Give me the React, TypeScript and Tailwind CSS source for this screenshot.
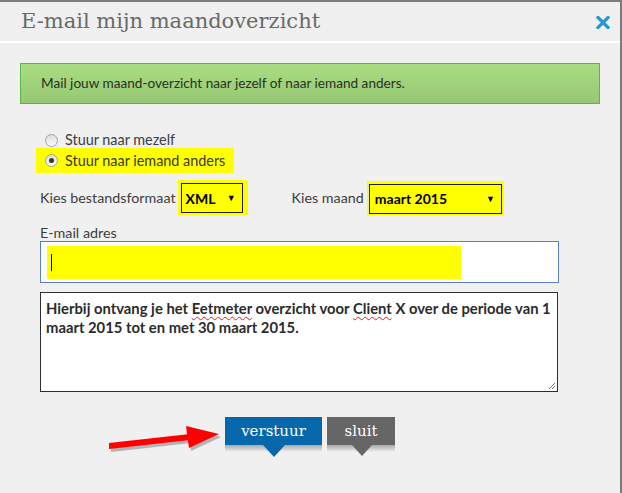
import React from "react";

function Radio({ checked }: { checked?: boolean }) {
  return (
    <span className="relative inline-flex h-[13px] w-[13px] shrink-0 items-center justify-center rounded-full border border-[#a3a3a3] bg-gradient-to-b from-[#dcdcdc] to-[#fbfbfb]">
      {checked && <span className="h-[5px] w-[5px] rounded-full bg-[#3a3a1a]" />}
    </span>
  );
}

export default function App() {
  const body = { fontFamily: "Lato, 'Open Sans', sans-serif" };
  const serif = { fontFamily: "'DejaVu Serif', 'Liberation Serif', serif" };
  return (
    <div className="relative h-[493px] w-[622px] overflow-hidden bg-[#7c7c7c] pt-[2px] pr-[2px]">
      <div className="h-[491px] w-[620px] bg-[#f0f0f0]" style={body}>
        {/* header */}
        <div className="flex h-[41px] items-center justify-between border-b-[2px] border-white pl-[21px] pr-[10px]">
          <h1 className="text-[21px] leading-none text-[#696969]" style={serif}>
            E-mail mijn maandoverzicht
          </h1>
          <svg width="14" height="13" viewBox="0 0 14 13" className="mt-[1px]">
            <path d="M2 1.5 L12 11.5 M12 1.5 L2 11.5" stroke="#2299d6" strokeWidth="3.2" strokeLinecap="square" />
          </svg>
        </div>

        <div className="px-[20px] pt-[20px]">
          {/* info box */}
          <div className="flex h-[41px] items-center border border-[#56b848] bg-gradient-to-b from-[#a9dd82] to-[#97c774] pl-[20px] text-[13.6px] text-[#2a2f25]">
            Mail jouw maand-overzicht naar jezelf of naar iemand anders.
          </div>

          {/* radios */}
          <div className="mt-[27px] ml-[16px] flex h-[18px] items-center gap-[7px] pl-[9px] text-[14.4px] text-[#3d3d3d]">
            <Radio />
            <span>Stuur naar mezelf</span>
          </div>
          <div className="mt-[-1px] ml-[16px] flex h-[25px] w-[198px] items-center gap-[7px] bg-[#ffff00] pl-[9px] text-[14.4px] text-[#3a3a1a]">
            <Radio checked />
            <span>Stuur naar iemand anders</span>
          </div>

          {/* selects */}
          <div className="mt-[7px] ml-[20px] flex h-[35px] items-center text-[14.3px] text-[#3d3d3d]">
            <span>Kies bestandsformaat</span>
            <div className="ml-[2px] h-[35px] w-[70px] bg-[#ffff00] pt-[3px] pl-[3px] pr-[5px] pb-[2px]">
              <div className="flex h-full w-full items-center justify-between border border-[#1c1c1c] pl-[4px] pr-[6px]">
                <span className="text-[14px] font-bold text-black">XML</span>
                <span className="text-[9px] text-black">▼</span>
              </div>
            </div>
            <span className="ml-[44px]">Kies maand</span>
            <div className="ml-[3px] h-[34px] w-[137px] bg-[#ffff00] pt-[3px] pl-[2px] pr-[2px] pb-[1px]">
              <div className="flex h-full w-full items-center justify-between border border-[#1c1c1c] pl-[5px] pr-[6px]">
                <span className="text-[14px] font-bold text-black">maart 2015</span>
                <span className="text-[9px] text-black">▼</span>
              </div>
            </div>
          </div>

          {/* email */}
          <div className="mt-[9px] ml-[20px] flex h-[17px] items-center text-[14.3px] text-[#3d3d3d]">E-mail adres</div>
          <div className="ml-[20px] h-[42px] w-[519px] border border-[#5a80c4] bg-white pt-[4px] pl-[6px]">
            <div className="flex h-[33px] w-[414px] items-center bg-[#ffff00] pl-[4px]">
              <span className="h-[17px] w-px bg-black" />
            </div>
          </div>

          {/* textarea */}
          <div className="relative mt-[9px] ml-[20px] h-[100px] w-[518px] border border-[#2e2e2e] bg-white pt-[6px] pl-[5px] text-[14.8px] font-bold leading-[19px] text-[#2b2b2b]">
            Hierbij ontvang je het{" "}
            <span className="underline decoration-[#e02020] decoration-wavy decoration-1 underline-offset-[2px]">Eetmeter</span>{" "}
            overzicht voor{" "}
            <span className="underline decoration-[#e02020] decoration-wavy decoration-1 underline-offset-[2px]">Client</span>{" "}
            X over de periode van 1
            <br />
            maart 2015 tot en met 30 maart 2015.
            <svg width="9" height="9" viewBox="0 0 9 9" className="absolute right-[1px] bottom-[1px]">
              <path d="M8 2 L2 8 M8 5 L5 8" stroke="#777" strokeWidth="1" />
            </svg>
          </div>

          {/* buttons */}
          <div className="mt-[25px] ml-[205px] flex gap-[5px]" style={serif}>
            <div className="flex flex-col">
              <div className="flex h-[28px] w-[97px] items-center justify-center bg-[#0767ab] text-[15px] text-white">verstuur</div>
              <div className="relative h-[7px] w-[97px] bg-gradient-to-b from-[#a8a8a8] to-[#f0f0f0]">
                <span className="absolute left-[38px] top-0 h-0 w-0 border-x-[11px] border-t-[12px] border-x-transparent border-t-[#0767ab]" />
              </div>
            </div>
            <div className="flex flex-col">
              <div className="flex h-[28px] w-[68px] items-center justify-center bg-[#666666] text-[15px] text-white">sluit</div>
              <div className="relative h-[7px] w-[68px] bg-gradient-to-b from-[#a8a8a8] to-[#f0f0f0]">
                <span className="absolute left-[25px] top-0 h-0 w-0 border-x-[10px] border-t-[11px] border-x-transparent border-t-[#666666]" />
              </div>
            </div>
          </div>
        </div>
      </div>

      {/* red annotation arrow */}
      <svg className="absolute left-0 top-0" width="622" height="493" viewBox="0 0 622 493">
        <g transform="translate(2,3)" opacity="0.25">
          <path d="M109 443 L190 434 L189 440 L109 449 Z" fill="#000" />
          <path d="M186 426 L219 434 L189 448 Z" fill="#000" />
        </g>
        <path d="M109 443 L190 434 L190 440 L109 449 Z" fill="#ff0000" />
        <path d="M186 426 L219 434 L189 448 Z" fill="#ff0000" />
      </svg>
    </div>
  );
}
